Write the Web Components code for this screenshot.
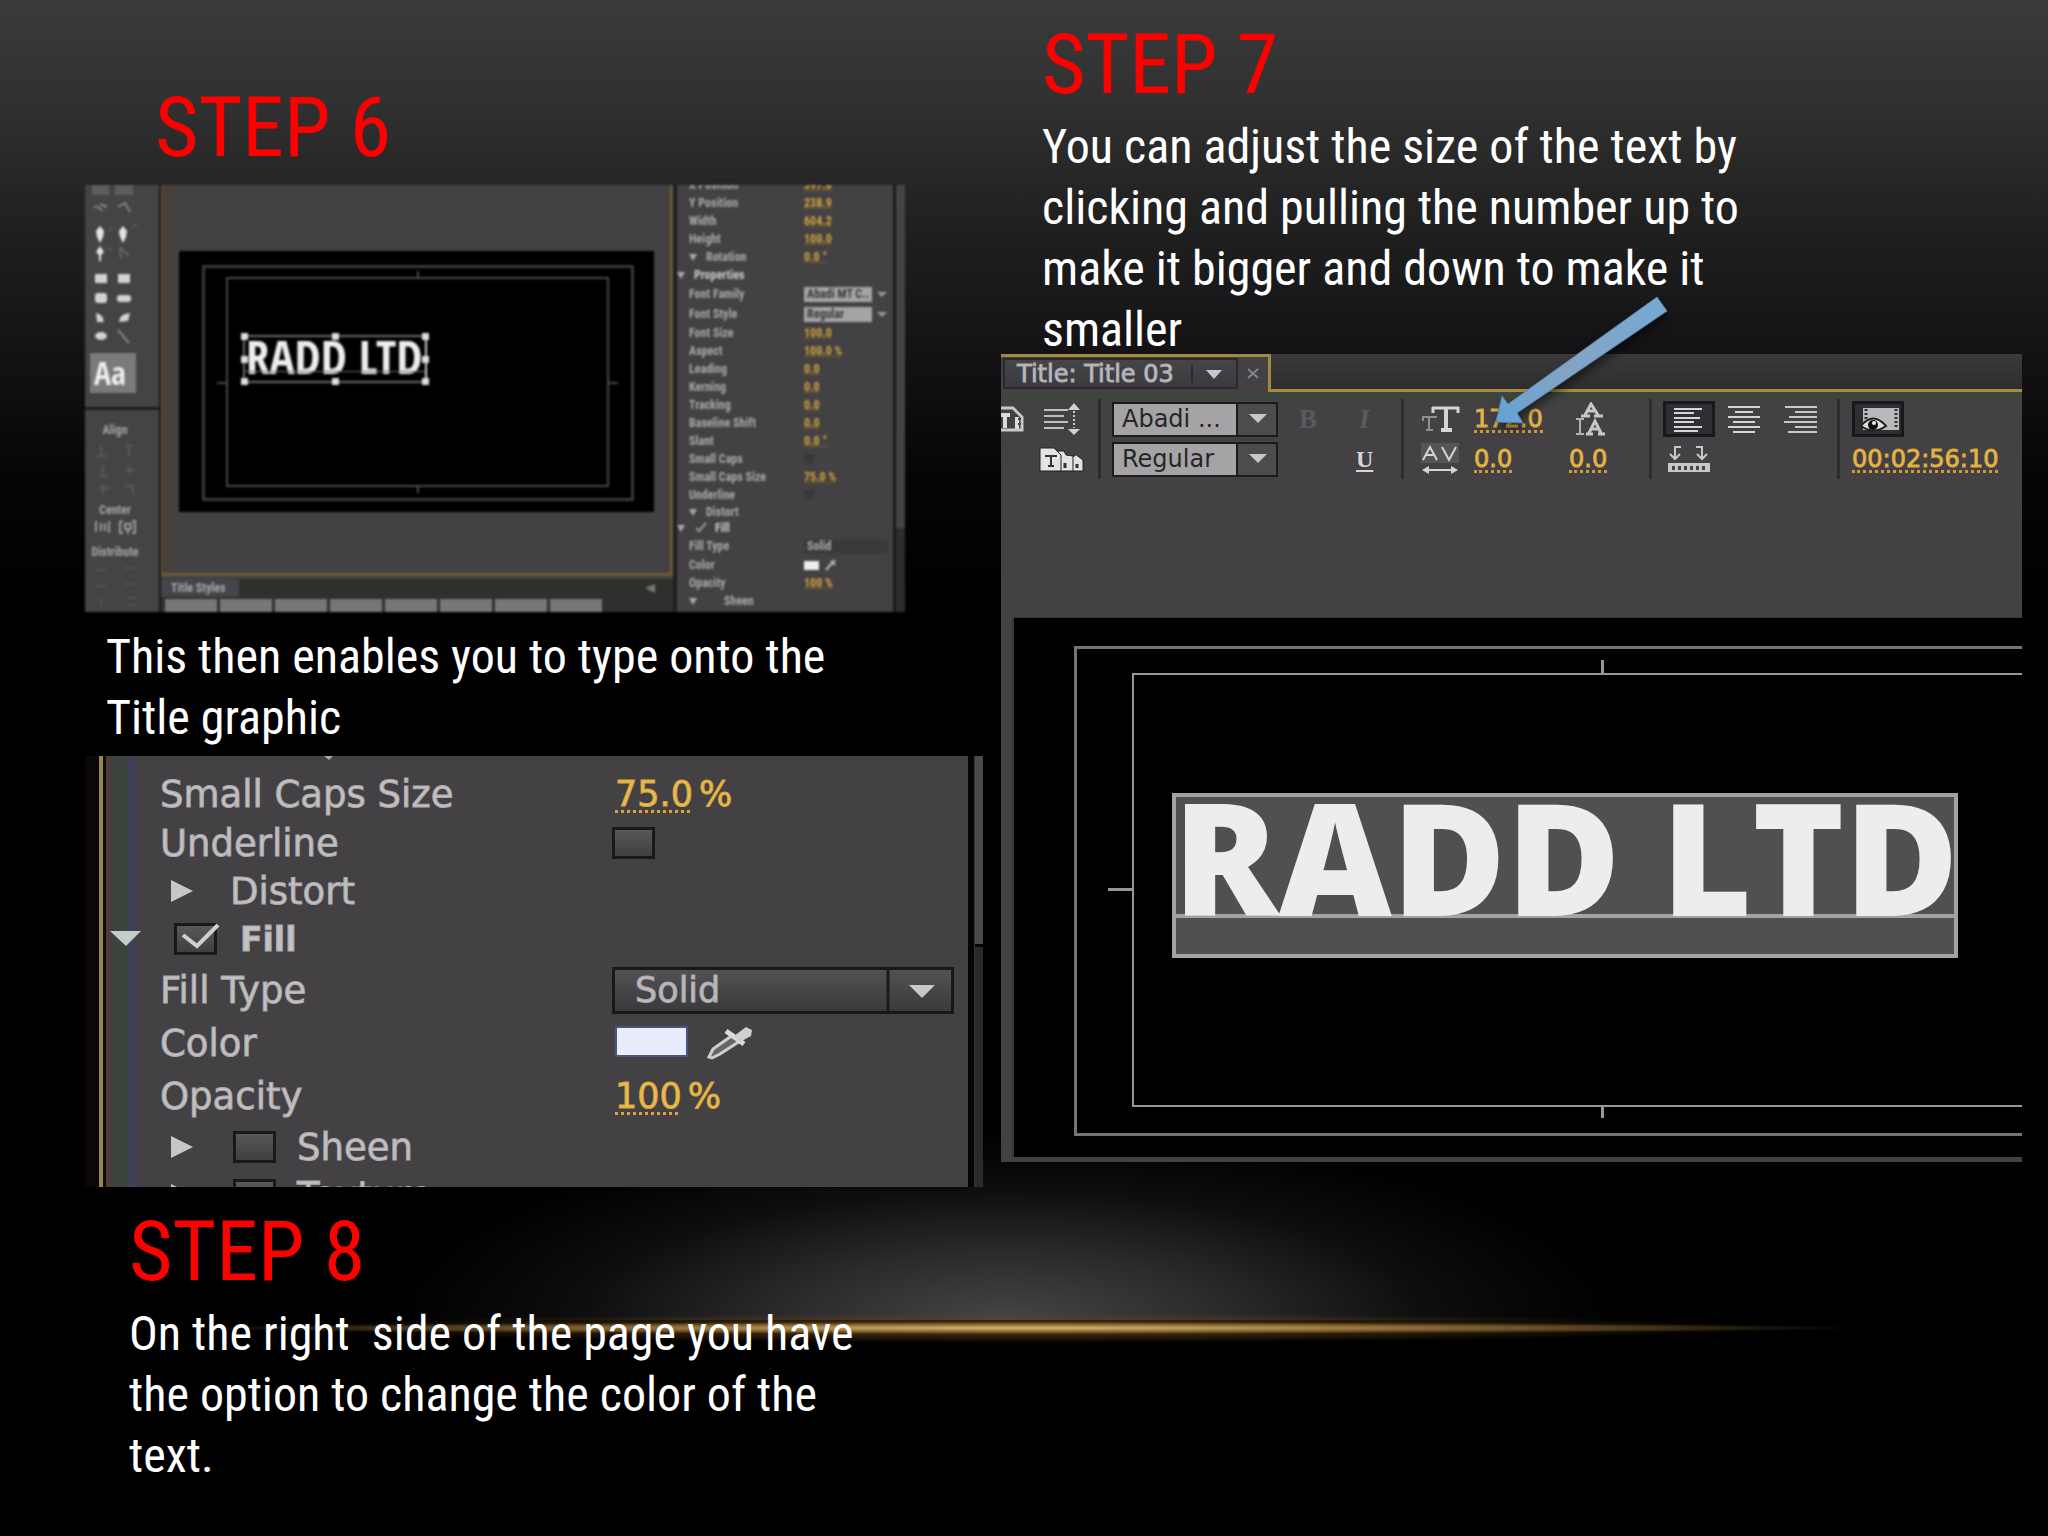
<!DOCTYPE html>
<html lang="en">
<head>
<meta charset="utf-8">
<title>Title graphic tutorial: steps 6 to 8</title>
<style>
  html, body { margin: 0; min-height: 100%; background: #000; }
  body { font-family: "Roboto Condensed", "Arial Narrow", "Liberation Sans", sans-serif; color: #fff; }
</style>
</head>
<body>
<tutorial-slide>
  <step-block slot="left" class="six">
    <span slot="title">STEP 6</span>
    <title-editor></title-editor>
    <span slot="text">This then enables you to type onto the<br>Title graphic</span>
  </step-block>
  <fill-panel slot="left"></fill-panel>
  <step-block slot="left" class="eight">
    <span slot="title">STEP 8</span>
    <span slot="text">On the right&nbsp; side of the page you have<br>the option to change the color of the<br>text.</span>
  </step-block>
  <step-block slot="right" class="seven">
    <span slot="title">STEP 7</span>
    <span slot="text">You can adjust the size of the text by<br>clicking and pulling the number up to<br>make it bigger and down to make it<br>smaller</span>
  </step-block>
  <title-window slot="right"></title-window>
</tutorial-slide>

<script>
const define = (name, html) => {
  const template = document.createElement('template');
  template.innerHTML = html;
  customElements.define(name, class extends HTMLElement {
    constructor() {
      super();
      this.attachShadow({ mode: 'open' }).append(template.content.cloneNode(true));
    }
    connectedCallback() {
      for (const node of this.shadowRoot.querySelectorAll('[data-attr]'))
        node.textContent = this.getAttribute(node.dataset.attr) || '';
    }
  });
};

/* Slide: dark backdrop with a stage light, two columns */
define('tutorial-slide', `
<style>
  :host { display: grid; grid-template-columns: 898fr 1021fr; column-gap: 18px; align-items: start;
    box-sizing: border-box; min-height: 100vh; padding: 0 26px 0 85px;
    background:
      radial-gradient(ellipse 41% 6px at 50% 1328px, rgba(225,188,115,.9), rgba(190,150,80,.6) 50%, transparent) no-repeat,
      radial-gradient(ellipse 36% 15px at 50% 1328px, rgba(150,110,45,.75), rgba(100,68,22,.5) 50%, transparent) no-repeat,
      radial-gradient(ellipse 30% 190px at 49% 100%, #464446, #2c2a2d 35%, rgba(18,17,19,.8) 68%, transparent) 0 0 / 100% 1320px no-repeat,
      linear-gradient(#3a3a3a, #313132 100px, #232323 200px, #151316 340px, #070607 470px, #000 600px); }
  .col { display: flex; flex-direction: column; min-width: 0; }
  .right { padding-top: 14px; }
  .left { padding-top: 77px; }
</style>
<div class="col left"><slot name="left"></slot></div>
<div class="col right"><slot name="right"></slot></div>`);

define('step-block', `
<style>
  :host { display: block; --inset: 41px; --text-inset: 41px; }
  :host(.six) { --inset: 70px; --text-inset: 21px; }
  :host(.seven) { margin-bottom: -6px; position: relative; }
  :host(.eight) { --inset: 44px; --text-inset: 44px; padding-top: 14px; }
  h2 { margin: 0; padding-left: var(--inset); font-size: 84px; line-height: 102px; font-weight: 400; color: #f00; }
  p { margin: 0; padding-left: var(--text-inset); font-size: 48px; line-height: 61px; white-space: nowrap; }
  :host(.six) h2 { padding-bottom: 6px; }
  :host(.six) p { padding-top: 14px; padding-bottom: 8px; }
</style>
<h2><slot name="title"></slot></h2>
<slot></slot>
<p><slot name="text"></slot></p>`);

/* Row of the small properties list */
define('mini-row', `
<style>
  :host { display: grid; grid-template-columns: 115px 1fr; align-items: center; height: 18px; padding-left: 12px; white-space: nowrap; }
  :host(.tall) { height: 20px; } :host(.short) { height: 16px; }
  :host(.head) { grid-template-columns: 127px 1fr; padding-left: 0; color: #ccc; }
  .lab { display: flex; align-items: center; }
  ::slotted(i) { width: 0; height: 0; border: 4px solid transparent; border-top: 7px solid #aaa; border-bottom: 0; margin-right: 9px; }
</style>
<div class="lab"><slot name="mark"></slot><span data-attr="label"></span></div>
<div><slot></slot></div>`);

define('title-editor', `
<style>
  :host { display: grid; grid-template-columns: 76px 1fr 220px 12px; width: 820px; max-width: 100%; height: 427px; overflow: hidden;
    background: #434143; color: #aaa8aa; font: 700 12px "Roboto Condensed", "Liberation Sans", sans-serif; filter: blur(1px); }
  .tools { display: flex; flex-direction: column; background: #444; border-right: 2px solid #1b1a18; box-sizing: border-box; }
  .tools svg { display: block; flex: none; }
  .aa { width: 46px; height: 40px; margin: 0 0 14px 5px; padding: 0 6px 0 0; border: 0; background: #7b7a7b; color: #eee;
    font: 700 32px "Open Sans Condensed", "Liberation Sans", sans-serif; line-height: 40px; }
  .align { border-top: 3px solid #1d1c1d; padding-top: 12px; }
  .align span { display: block; line-height: 16px; text-align: center; width: 60px; color: #a5a5a5; }
  .main { display: flex; flex-direction: column; min-width: 0; }
  .view { height: 391px; box-sizing: border-box; flex: none; border: solid #6b5a35; border-width: 0 3px 3px 1px; padding: 66px 16px 0 17px; background: linear-gradient(90deg, #4a403a, #434143 16px); }
  .stage { position: relative; height: 261px; background: #000; }
  .g, .tick, .title, .h { position: absolute; box-sizing: border-box; }
  .outer { inset: 14px 20px 11px 23px; border: 3px solid #39383a; }
  .inner { inset: 26px 45px 25px 47px; border: 2px solid #49484a; }
  .tick { background: #49484a; }
  .title { left: 64px; top: 84px; width: 184px; height: 48px; border: 2px solid #69676b; border-right-color: #ccc; }
  .title b { position: absolute; left: 1px; top: -6px; font: 700 47px/50px "Open Sans Condensed", "Liberation Sans", sans-serif; color: #eeecee; white-space: nowrap; }
  .title::after { content: ""; position: absolute; left: 0; right: 0; top: 34px; border-top: 1px solid #69676b; }
  .h { width: 7px; height: 7px; background: #ddd; z-index: 1; }
  .styles { margin-top: 3px; background: #30302b; height: 18px; display: flex; flex: none; justify-content: space-between; }
  .styles span { background: #45444a; padding: 0 10px; line-height: 18px; width: 58px; white-space: nowrap; }
  .thumbs { display: flex; gap: 3px; background: #302f30; flex: 1; padding: 2px 0 0 4px; }
  .thumbs i { width: 52px; background: #777; }
  .props { border-left: 4px solid #201f20; box-sizing: border-box; overflow: hidden; background: #434143; }
  .list { margin-top: -9px; }
  .n { all: unset; color: #d2a43c; font: inherit; text-decoration: underline dotted #a6761c; }
  select { appearance: none; border: 0; border-radius: 0; width: 68px; height: 15px; padding: 0 3px; background: #a5a3a6; color: #3a393b; font: 700 12px/15px "Roboto Condensed", "Liberation Sans", sans-serif; vertical-align: middle; }
  select.dark { background: #3b3a3b; color: #aaa; width: 84px; }
  .dd { display: inline-block; border: 5px solid transparent; border-top-color: #999; border-bottom: 0; margin-left: 5px; vertical-align: middle; }
  input { appearance: none; width: 10px; height: 8px; margin: 0; background: #3a393c; border-top: 1px solid #2b2b33; }
  .color { display: flex; align-items: center; gap: 6px; }
  .sw { width: 15px; height: 9px; background: #eee; }
  .bar { border-left: 3px solid #1b1a1b; background: linear-gradient(#454445 343px, #2e2d2e 343px); }
</style>
<div class="tools">
  <svg width="74" height="168" viewBox="0 0 74 168">
    <g fill="#5e5d5e"><rect x="7" y="0" width="17" height="10"/><rect x="30" y="0" width="18" height="10"/></g>
    <g fill="none" stroke="#858485" stroke-width="2"><path d="M9 22q4-2 8 4M15 19l7 3M33 22l7-4 5 9"/><path d="M35 62l1 11M36 63l8 8" stroke="#666"/><path d="M33 145l11 13"/></g>
    <g fill="#e4e4e4"><path d="M15 41l4 5-1 6-3 6-3-6-1-6z"/><path d="M38 41l4 5-1 6-3 6-3-6-1-6z"/><path d="M15 61l4 6-3 3v6h-2v-6l-3-3z"/></g>
    <g fill="#d2d2d2"><rect x="10" y="89" width="12" height="9"/><rect x="33" y="89" width="12" height="9"/><rect x="10" y="108" width="12" height="10" rx="3"/><rect x="32" y="110" width="14" height="7" rx="3"/><path d="M11 128q7 1 8 9h-7zM34 137q0-8 11-9l-2 8z"/><ellipse cx="16" cy="151" rx="6" ry="4"/></g>
    <path d="M24 46l4-4M47 43l5-4M23 63l4 2" stroke="#777"/>
  </svg>
  <button class="aa" aria-label="Type tool">Aa</button>
  <div class="align">
    <span>Align</span>
    <svg width="74" height="64" viewBox="0 0 74 64" stroke="#5c5b5c" stroke-width="2" fill="none"><path d="M16 8v8M12 18h9M40 8h8M44 10v8M18 27v9M14 38h9M40 32h9M44 28v8M14 50h10M18 46v10M40 48h8M48 46v10"/></svg>
    <span>Center</span>
    <svg width="74" height="26" viewBox="0 0 74 26" stroke="#999" fill="none" stroke-width="2"><path d="M11 3v11M16 5v8M20 5v8M24 3v12M35 3h3M35 3v12h3M47 3h3v12h-3M40 6h6v5h-6zM43 10v6"/></svg>
    <span>Distribute</span>
    <svg width="74" height="50" viewBox="0 0 74 50" stroke="#525152" stroke-width="2" fill="none"><path d="M12 10h9M40 8h10M12 26h9M40 24h10M16 38v8M42 38h8M42 45h8"/></svg>
  </div>
</div>
<div class="main">
  <div class="view">
    <div class="stage">
      <div class="g outer"></div><div class="g inner"></div>
      <i class="tick" style="left:50%;top:20px;width:2px;height:8px"></i><i class="tick" style="left:50%;bottom:19px;width:2px;height:8px"></i>
      <i class="tick" style="left:38px;top:50%;width:10px;height:2px"></i><i class="tick" style="right:36px;top:50%;width:10px;height:2px"></i>
      <div class="title"><b>RADD LTD</b>
        <i class="h" style="left:-4px;top:-4px"></i><i class="h" style="left:calc(50% - 3px);top:-4px"></i><i class="h" style="right:-4px;top:-4px"></i>
        <i class="h" style="left:-4px;top:19px"></i><i class="h" style="right:-4px;top:19px"></i>
        <i class="h" style="left:-4px;bottom:-4px"></i><i class="h" style="left:calc(50% - 3px);bottom:-4px"></i><i class="h" style="right:-4px;bottom:-4px"></i>
      </div>
    </div>
  </div>
  <div class="styles"><span>Title Styles</span><svg width="30" height="18"><path d="M2 9l10-4v9z" fill="#777"/></svg></div>
  <div class="thumbs"><i></i><i></i><i></i><i></i><i></i><i></i><i></i><i></i></div>
</div>
<div class="props"><div class="list">
  <mini-row label="X Position"><button class="n">397.8</button></mini-row>
  <mini-row label="Y Position"><button class="n">238.9</button></mini-row>
  <mini-row label="Width"><button class="n">604.2</button></mini-row>
  <mini-row label="Height"><button class="n">100.0</button></mini-row>
  <mini-row label="Rotation"><i slot="mark"></i><button class="n">0.0 °</button></mini-row>
  <mini-row class="head" label="Properties"><i slot="mark"></i></mini-row>
  <mini-row class="tall" label="Font Family"><select aria-label="Font Family"><option>Abadi MT C...</option></select><i class="dd"></i></mini-row>
  <mini-row class="tall" label="Font Style"><select aria-label="Font Style"><option>Regular</option></select><i class="dd"></i></mini-row>
  <mini-row label="Font Size"><button class="n">100.0</button></mini-row>
  <mini-row label="Aspect"><button class="n">100.0 %</button></mini-row>
  <mini-row label="Leading"><button class="n">0.0</button></mini-row>
  <mini-row label="Kerning"><button class="n">0.0</button></mini-row>
  <mini-row label="Tracking"><button class="n">0.0</button></mini-row>
  <mini-row label="Baseline Shift"><button class="n">0.0</button></mini-row>
  <mini-row label="Slant"><button class="n">0.0 °</button></mini-row>
  <mini-row label="Small Caps"><input type="checkbox" aria-label="Small Caps"></mini-row>
  <mini-row label="Small Caps Size"><button class="n">75.0 %</button></mini-row>
  <mini-row label="Underline"><input type="checkbox" aria-label="Underline"></mini-row>
  <mini-row class="short" label="Distort"><i slot="mark"></i></mini-row>
  <mini-row class="short head" label="Fill"><i slot="mark"></i><svg slot="mark" width="21" height="12"><path d="M2 6l3 3 7-8" stroke="#999" stroke-width="2" fill="none"/></svg></mini-row>
  <mini-row class="tall" label="Fill Type"><select class="dark" aria-label="Fill Type"><option>Solid</option></select></mini-row>
  <mini-row label="Color"><div class="color"><i class="sw"></i><svg width="12" height="12"><path d="M1 11l6-7M6 2l4 4M8 4l2-3" stroke="#bbb" stroke-width="2"/></svg></div></mini-row>
  <mini-row label="Opacity"><button class="n">100 %</button></mini-row>
  <mini-row label="Sheen"><i slot="mark"></i><svg slot="mark" width="18" height="8"></svg></mini-row>
</div></div>
<div class="bar"></div>`);

/* Enlarged fill settings */
define('fill-panel', `
<style>
  :host { display: grid; grid-template-columns: 14px 1fr 9px; height: 431px; overflow: hidden; background: #434143;
    color: #c3c1c3; font: 37px "DejaVu Sans", sans-serif; }
  .edge { background: #0b0709; }
  .rail { border-left: 4px solid #9c8650; border-right: 6px solid #050406; overflow: hidden;
    background: linear-gradient(90deg, #110b08 3px, #4a3d3b 3px 10px, #3c4440 10px 25px, #40405a 25px 30px, #434143 34px); }
  .bar { background: linear-gradient(#4b4a4b 188px, #050505 188px 191px, #2a292b 191px); border-left: 1px solid #333; }
  .crumb { display: block; height: 13px; }
  .row { display: grid; grid-template-columns: 57px 452px 1fr; align-items: center; height: 48px; white-space: nowrap; }
  .h50 { height: 50px; } .h54 { height: 54px; } .h52 { height: 52px; }
  .lab { display: flex; align-items: center; grid-column: 2; -webkit-text-stroke: 1px #aaa8aa; }
  .val { grid-column: 3; display: flex; align-items: center; }
  .n { all: unset; color: #e9bd55; padding-left: 3px; -webkit-text-stroke: 1px #d9a53a; font-size: 35px; white-space: nowrap; display: flex; gap: 6px; }
  .n u { text-decoration: underline dotted 3px; text-underline-offset: 4px; }
  svg { display: block; flex: none; }
  input { appearance: none; flex: none; width: 43px; height: 32px; margin: 0; box-sizing: border-box; border: 3px solid #1a191a; background: linear-gradient(#58575a, #3f3e40); }
  .wrap { display: grid; } .wrap > * { grid-area: 1 / 1; }
  .wrap svg { overflow: visible; pointer-events: none; }
  .sel { display: grid; width: 342px; height: 47px; box-sizing: border-box; border: 3px solid #1a191a; background: linear-gradient(#525153, #3a393b); }
  .sel > * { grid-area: 1 / 1; }
  .sel svg { justify-self: end; pointer-events: none; }
  select { appearance: none; border: 0; margin: 0; background: none; color: #bcbabc; font: 35px "DejaVu Sans", sans-serif; line-height: 41px; -webkit-text-stroke: 1px #aaa8aa; padding: 0 20px; }
  .sw { width: 69px; height: 27px; border: 0; padding: 0; margin: 0 18px 4px 5px; background: #e9edfb; outline: 2px solid #45577e; }
  b { font-size: 33px; }
</style>
<div class="edge"></div>
<div class="rail">
  <svg class="crumb" width="300" height="13"><path d="M221 0h9l-4 4z" fill="#aaa8aa"/></svg>
  <div class="row h50"><span class="lab">Small Caps Size</span><span class="val"><button class="n"><u>75.0</u><span>%</span></button></span></div>
  <div class="row"><label class="lab" for="ul">Underline</label><span class="val"><input id="ul" type="checkbox"></span></div>
  <div class="row"><span class="lab"><svg width="70" height="22"><path d="M11 0l22 11-22 11z" fill="#c8c6c8"/></svg>Distort</span></div>
  <div class="row"><svg width="57" height="16"><path d="M7 0h31l-15 15z" fill="#c5cdc9"/></svg>
    <label class="lab"><svg width="14" height="9"></svg><span class="wrap"><input type="checkbox" checked><svg width="43" height="32"><path d="M9 12l14 11L44 2" stroke="#d0ced0" stroke-width="4" fill="none"/></svg></span><svg width="23" height="9"></svg><b>Fill</b></label></div>
  <div class="row h54"><label class="lab" for="ft">Fill Type</label><span class="val"><span class="sel"><select id="ft"><option>Solid</option></select><svg width="66" height="41"><path d="M3 0v41" stroke="#1c1b1c" stroke-width="3"/><path d="M24 15h26l-13 13z" fill="#c9c7c9"/></svg></span></span></div>
  <div class="row h52"><span class="lab">Color</span><span class="val"><button class="sw" aria-label="Fill color"></button>
    <svg width="50" height="36"><path d="M5 32l4-8 20-14 7 6-20 13-8 4z" fill="#666" stroke="#cfcdcf" stroke-width="3"/><path d="M22 6l18 13" stroke="#dddbdd" stroke-width="5"/><path d="M30 11L42 2l6 3-1 6-11 6z" fill="#cfcdcf"/></svg></span></div>
  <div class="row h54"><span class="lab">Opacity</span><span class="val"><button class="n"><u>100</u><span>%</span></button></span></div>
  <div class="row"><label class="lab"><svg width="73" height="22"><path d="M11 0l22 11-22 11z" fill="#c8c6c8"/></svg><input type="checkbox"><svg width="21" height="9"></svg>Sheen</label></div>
  <div class="row"><label class="lab"><svg width="73" height="22"><path d="M11 0l22 11-22 11z" fill="#c8c6c8"/></svg><input type="checkbox"><svg width="21" height="9"></svg>Texture</label></div>
</div>
<div class="bar"></div>`);

/* Font drop-down of the toolbar */
define('font-combo', `
<style>
  :host { display: grid; width: 166px; height: 35px; box-sizing: border-box; border: 2px solid #1d1c1d; background: linear-gradient(90deg, #a5a3a5 122px, #1d1c1d 122px 124px, #4c4b4d 124px); }
  select { grid-area: 1 / 1; appearance: none; border: 0; margin: 0; padding: 0 8px; background: none; color: #262527; font: 24px "DejaVu Sans", sans-serif; }
  svg { grid-area: 1 / 1; justify-self: end; align-self: center; pointer-events: none; }
</style>
<select aria-label="Font"><option data-attr="value"></option></select>
<svg width="40" height="12"><path d="M13 1h18l-9 9z" fill="#c9c7c9"/></svg>`);

define('title-window', `
<style>
  :host { display: block; background: #434143; height: 808px; position: relative; color: #c3c1c3; font: 24px "DejaVu Sans", sans-serif; }
  .tabs { display: flex; height: 38px; }
  .tab { width: 270px; flex: none; box-sizing: border-box; display: flex; align-items: center; border: solid #a08a41; border-width: 3px 3px 0 0; padding: 0 8px 2px 2px; justify-content: space-between; }
  .name { display: flex; align-items: center; width: 235px; height: 31px; box-sizing: border-box; border: 2px solid #2b292c; background: linear-gradient(#454449, #3b3a3e); padding-left: 12px; font-size: 24px; line-height: 24px; white-space: nowrap; -webkit-text-stroke: 1px #aaa8aa; }
  .rest { flex: 1; border-bottom: 3px solid #a98b43; background: linear-gradient(#3b3a3b, #2f2d2d); }
  .bar { display: grid; grid-template-columns: 100fr 177fr 126fr 248fr 188fr 182fr; height: 225px; padding-top: 7px; box-sizing: border-box; background: linear-gradient(#3c463e, #434143 12px); }
  .g { height: 80px; display: grid; grid-template-rows: 40px 40px; align-items: center; }
  .line { border-right: 3px solid #2d2c2e; }
  button { all: unset; display: block; }
  .n { color: #e9bd55; line-height: 26px; border-bottom: 3px dotted #d09a35; justify-self: start; -webkit-text-stroke: 1px #d9a53a; height: 24px; }
  svg { display: block; }
  .biu { grid-template-columns: 52px 1fr; padding-left: 21px; font: 700 27px "Liberation Serif", serif; color: #5b5a5c; }
  .biu u { color: #d6d4d6; font-size: 24px; grid-column: 2; margin-left: 5px; text-underline-offset: 3px; }
  .biu i { margin-left: 8px; }
  .size { grid-template-columns: 53px 95px 1fr; padding-left: 17px; }
  .align { grid-template-columns: 61px 59px 1fr; padding-left: 11px; }
  .on { width: 52px; height: 36px; box-sizing: border-box; border: 3px solid #1a181b; background: #302e32; }
  .tc { padding-left: 12px; }
  .canvas { position: relative; margin-left: 11px; height: 540px; background: #000; overflow: hidden; border: solid #39373a; border-width: 1px 0 0 2px; box-sizing: border-box; }
  .canvas > * { position: absolute; box-sizing: border-box; }
  .outer { left: 60px; right: -10px; top: 28px; height: 490px; border: 3px solid #757375; }
  .inner { left: 118px; right: -10px; top: 55px; height: 434px; border: 2px solid #979597; }
  .tick { background: #979597; }
  .sel { left: 158px; right: 64px; top: 175px; height: 165px; border: 4px solid #a4a2a4; background: linear-gradient(#524f52 117px, #a4a2a4 117px 121px, #524f52 121px); }
  .sel b { display: block; margin: -1px 0 0 -3px; font: 800 156px/120px "Open Sans", sans-serif; color: #eeecee; white-space: nowrap; }
  .arrow { position: absolute; left: 488px; top: -62px; z-index: 2; pointer-events: none; filter: drop-shadow(2px 5px 4px rgba(0,0,0,.5)); }
</style>
<div class="tabs">
  <div class="tab"><span class="name">Title: Title 03<svg width="60" height="26"><path d="M18 4v18" stroke="#29282a" stroke-width="2"/><path d="M32 9h16l-8 9z" fill="#c9c7c9"/></svg></span>
    <svg width="14" height="12"><path d="M2 1l10 9M12 1L2 10" stroke="#85838f" stroke-width="2"/></svg></div>
  <div class="rest"></div>
</div>
<div class="bar">
  <div class="g line">
    <button aria-label="New title"><svg width="90" height="34" viewBox="0 0 90 34"><path d="M0 6h12l9 9v13H0" fill="none" stroke="#c9c7c9" stroke-width="3"/><path d="M0 13h9M4 13v13M16 15v12" stroke="#dcdadc" stroke-width="4"/><path d="M17 17h3M17 22h3" stroke="#444" stroke-width="2"/>
      <path d="M43 8h24M43 14h20M43 20h24M43 26h20" stroke="#c0bec0" stroke-width="2"/><path d="M73 9v17" stroke="#c9c7c9" stroke-width="2" stroke-dasharray="2 2"/><path d="M73 1l6 7h-12zM73 33l6-6h-12z" fill="#d3d1d3"/></svg></button>
    <button aria-label="Templates"><svg width="90" height="30" viewBox="0 0 90 30"><g fill="#e4e2e4" stroke="#222" stroke-width="1"><path d="M70 12h4v-2l8 6v11H70z"/><path d="M57 7h6l2 4 7 1v15H57z"/><path d="M39 4h14l7 7v16H39z"/></g><path d="M44 12h12M50 12v10M47 22h6" stroke="#333" stroke-width="2"/><path d="M64 19v5M76 20v4" stroke="#333" stroke-width="3"/></svg></button>
  </div>
  <div class="g" style="padding-left:11px"><font-combo value="Abadi ..."></font-combo><font-combo value="Regular"></font-combo></div>
  <div class="g biu line"><button>B</button><button><i>I</i></button><u>U</u></div>
  <div class="g size line">
    <svg width="42" height="28" viewBox="0 0 42 28"><path d="M11 3h27M12 2v6M37 2v6" stroke="#d6d4d6" stroke-width="3"/><path d="M25 3v22M20 25h11" stroke="#d6d4d6" stroke-width="4"/><path d="M1 12h15M8 12v13M5 25h7M2 12v4" stroke="#918f91" stroke-width="2"/></svg>
    <button class="n">172.0</button>
    <svg width="36" height="34" viewBox="0 0 36 34" style="margin-left:4px"><g fill="none" stroke="#c9c7c9" stroke-width="3"><path d="M12 13l6-11 7 11M14 9h9M8 14h9M21 14h9"/><path d="M16 31l6-12 6 12M18 27h9M13 32h7M25 32h7"/></g><path d="M7 18v13M3 17h8M3 32h8" stroke="#b3b1b3" stroke-width="2"/></svg>
    <svg width="42" height="32" viewBox="0 0 42 32"><rect width="38" height="20" fill="#555456"/><g fill="none" stroke="#d6d4d6" stroke-width="2"><path d="M2 17L9 4l7 13M5 12h9M21 4l7 13 7-13M5 27h28"/></g><path d="M1 27l7-4v8zM37 27l-7-4v8z" fill="#d6d4d6"/></svg>
    <button class="n">0.0</button><button class="n">0.0</button>
  </div>
  <div class="g align line">
    <button class="on" aria-label="Align left"><svg width="46" height="30"><path d="M8 5h28M8 9h20M8 14h26M8 18h20M8 23h28M8 27h24" stroke="#d6d4d6" stroke-width="2"/></svg></button>
    <button aria-label="Align center"><svg width="40" height="32"><path d="M4 4h32M11 9h18M4 14h32M9 19h22M4 24h32M9 29h22" stroke="#d6d4d6" stroke-width="2"/></svg></button>
    <button aria-label="Align right"><svg width="40" height="32"><path d="M2 4h32M12 9h22M6 14h28M1 19h33M12 24h22M5 29h29" stroke="#c9c7c9" stroke-width="2"/></svg></button>
    <button aria-label="Tab stops"><svg width="50" height="28" viewBox="0 0 50 28"><path d="M18 2h-6v12M7 9l5 5 5-5M33 2h6v12M34 9l5 5 5-5" fill="none" stroke="#c9c7c9" stroke-width="2"/><rect x="5" y="18" width="42" height="9" fill="#c9c7c9"/><path d="M9 23h34" stroke="#444" stroke-width="4" stroke-dasharray="3 3"/></svg></button>
  </div>
  <div class="g tc">
    <button class="on" aria-label="Show background video"><svg width="46" height="30"><rect x="8" y="4" width="36" height="22" fill="#bab8ba"/><path d="M11 5v20M41 5v20" stroke="#333" stroke-width="3" stroke-dasharray="2 2"/><path d="M6 22q12-15 25 0-12 9-25 0z" fill="#ddd" stroke="#222" stroke-width="2"/><circle cx="18" cy="21" r="5" fill="#111"/><circle cx="19" cy="19" r="2" fill="#eee"/></svg></button>
    <button class="n">00:02:56:10</button>
  </div>
</div>
<div class="canvas">
  <div class="outer"></div><div class="inner"></div>
  <i class="tick" style="left:587px;top:42px;width:3px;height:13px"></i><i class="tick" style="left:587px;top:488px;width:3px;height:12px"></i>
  <i class="tick" style="left:94px;top:270px;width:24px;height:3px"></i>
  <div class="sel"><b>RADD LTD</b></div>
</div>
<svg class="arrow" width="190" height="140" viewBox="0 0 190 140">
  <defs><linearGradient id="a" x1="0" y1="1" x2="1" y2="0"><stop offset="0" stop-color="#62a3d6"/><stop offset=".4" stop-color="#83a4c3"/><stop offset="1" stop-color="#76a9d4"/></linearGradient></defs>
  <path d="M168 5l10 14L28 121l6 10-27-1 6-26 6 8z" fill="url(#a)" stroke="#5b7fa0" stroke-width="1"/>
</svg>`);
</script>
</body>
</html>
